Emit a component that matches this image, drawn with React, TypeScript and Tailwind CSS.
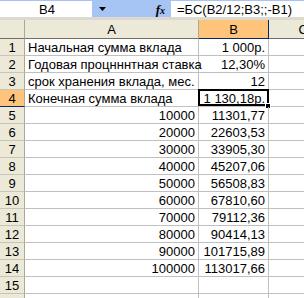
import React from 'react'

type Row = { a: string; b: string; aNum?: boolean }

const rows: Row[] = [
  { a: 'Начальная сумма вклада', b: '1 000р.' },
  { a: 'Годовая процнннтная ставка', b: '12,30%' },
  { a: 'срок хранения вклада, мес.', b: '12' },
  { a: 'Конечная сумма вклада', b: '1 130,18р.' },
  { a: '10000', b: '11301,77', aNum: true },
  { a: '20000', b: '22603,53', aNum: true },
  { a: '30000', b: '33905,30', aNum: true },
  { a: '40000', b: '45207,06', aNum: true },
  { a: '50000', b: '56508,83', aNum: true },
  { a: '60000', b: '67810,60', aNum: true },
  { a: '70000', b: '79112,36', aNum: true },
  { a: '80000', b: '90414,13', aNum: true },
  { a: '90000', b: '101715,89', aNum: true },
  { a: '100000', b: '113017,66', aNum: true },
  { a: '', b: '' },
  { a: '', b: '' },
]

const font = { fontFamily: '"Liberation Sans", Arial, sans-serif' }

function RowHeader({ n, active }: { n: number; active: boolean }) {
  return (
    <div
      className={
        'flex h-[17px] items-center justify-center border-r border-b text-[13px] leading-none ' +
        (active
          ? 'bg-[#ffc47c] border-r-[#aca899] border-b-[#0a246a]'
          : 'bg-[#ece9d8] border-r-[#aca899] border-b-[#c8c5b4]')
      }
    >
      {n}
    </div>
  )
}

export default function App() {
  return (
    <div className="w-[304px] h-[298px] overflow-hidden bg-white text-black" style={font}>
      {/* formula bar */}
      <div className="flex h-[17px] border-t border-[#a6c4f2]">
        <div className="flex w-[92px] items-center justify-center bg-white text-[13px] leading-none pl-[2px]">B4</div>
        <div className="flex w-[79px] items-center bg-[#a6c4f4]">
          <svg width="7" height="4" viewBox="0 0 7 4" className="ml-[7px]">
            <path d="M0 0h7L3.5 4z" fill="#000" />
          </svg>
          <span
            className="ml-auto mr-[6px] text-[13px] italic leading-none font-bold"
            style={{ fontFamily: '"Liberation Serif", serif' }}
          >
            f<span className="text-[10px]">x</span>
          </span>
        </div>
        <div className="flex flex-1 items-center bg-white pl-[6px] text-[13px] leading-none whitespace-nowrap">
          =БС(B2/12;B3;;-B1)
        </div>
      </div>
      <div className="h-[3px] bg-[#dcdad0]" />

      {/* sheet */}
      <div className="grid grid-cols-[25px_174px_70px_1fr]">
        {/* column headers */}
        <div className="h-[19px] bg-[#ece9d8] border-r border-b border-r-[#aca899] border-b-[#716f64]" />
        <div className="flex h-[19px] items-center justify-center bg-[#ece9d8] border-r border-b border-r-[#aca899] border-b-[#716f64] text-[13px] leading-none">
          A
        </div>
        <div className="flex h-[19px] items-center justify-center bg-[#ffc47c] border-r border-b border-r-[#0a246a] border-b-[#0a246a] text-[13px] leading-none">
          B
        </div>
        <div className="flex h-[19px] items-center justify-end bg-[#ece9d8] border-b border-b-[#716f64] pr-0 text-[13px] leading-none overflow-hidden">
          <span className="mr-[-4px]">C</span>
        </div>

        {rows.map((r, i) => (
          <React.Fragment key={i}>
            <RowHeader n={i + 1} active={i === 3} />
            <div
              className={
                'flex h-[17px] items-center border-r border-b border-[#c0c0c0] px-[3px] text-[13px] leading-none whitespace-nowrap ' +
                (r.aNum ? 'justify-end' : 'justify-start')
              }
            >
              {r.a}
            </div>
            <div className="relative flex h-[17px] items-center justify-end border-r border-b border-[#c0c0c0] px-[3px] text-[13px] leading-none whitespace-nowrap">
              {r.b}
              {i === 3 && (
                <>
                  <div className="absolute left-[-1px] top-[-1px] right-[-1px] bottom-[0px] border-2 border-black" />
                  <div className="absolute right-[-3px] bottom-[-3px] h-[6px] w-[6px] bg-black border border-white" />
                </>
              )}
            </div>
            <div className="h-[17px] border-b border-[#c0c0c0]" />
          </React.Fragment>
        ))}
      </div>
    </div>
  )
}
